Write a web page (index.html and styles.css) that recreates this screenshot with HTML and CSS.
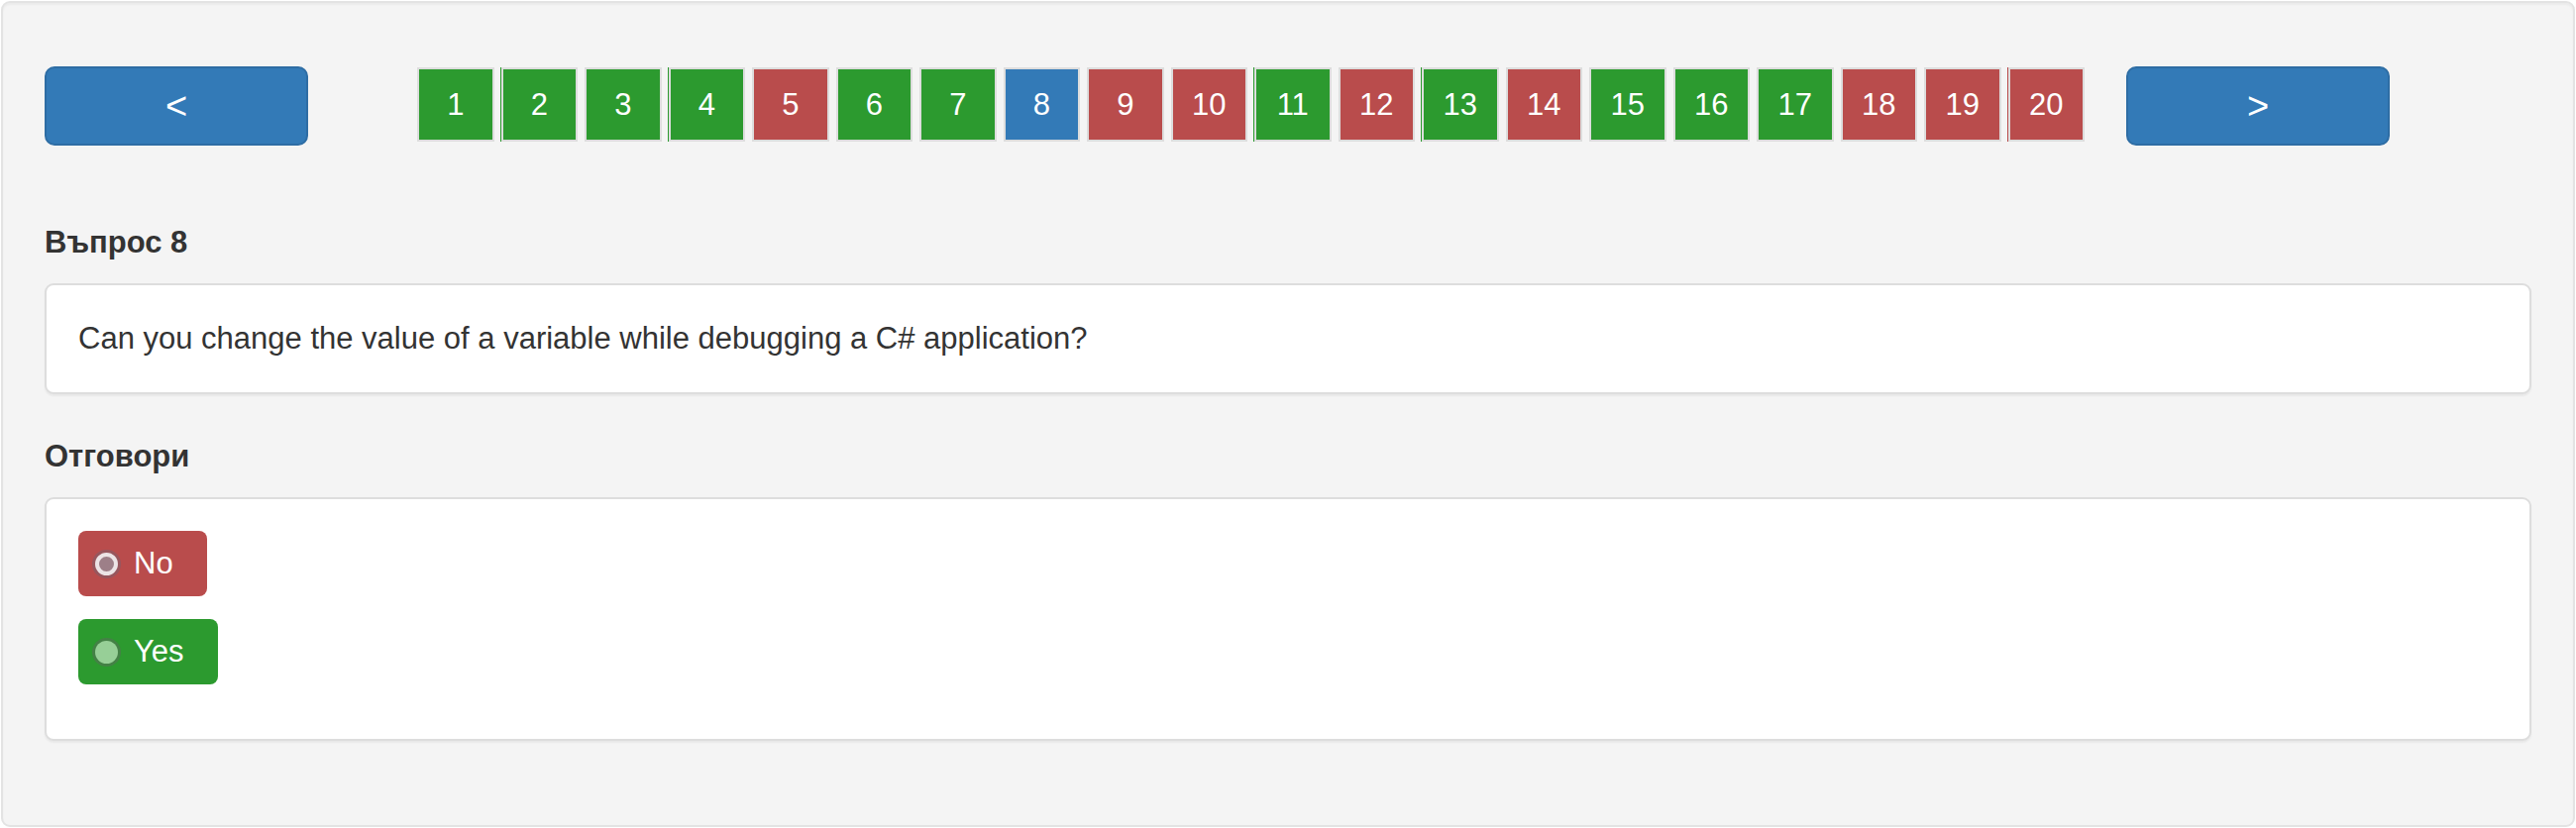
FILE: index.html
```html
<!DOCTYPE html>
<html lang="bg">
	<head>
		<meta charset="UTF-8" />
		<title>Тест</title>
		<link rel="stylesheet" href="styles.css">
	</head>
	<body>
		<div class="well">
			<div class="nav-row">
				<button class="btn-nav">&lt;</button>
				<div class="pager">
					<span class="q ok">1</span>
					<span class="q ok seam">2</span>
					<span class="q ok">3</span>
					<span class="q ok seam">4</span>
					<span class="q bad">5</span>
					<span class="q ok">6</span>
					<span class="q ok">7</span>
					<span class="q cur">8</span>
					<span class="q bad">9</span>
					<span class="q bad">10</span>
					<span class="q ok seam">11</span>
					<span class="q bad">12</span>
					<span class="q ok seam">13</span>
					<span class="q bad">14</span>
					<span class="q ok">15</span>
					<span class="q ok">16</span>
					<span class="q ok">17</span>
					<span class="q bad">18</span>
					<span class="q bad">19</span>
					<span class="q bad seam">20</span>
				</div>
				<button class="btn-nav next">&gt;</button>
			</div>

			<label class="title first">Въпрос 8</label>
			<div class="card">
				<p class="question">Can you change the value of a variable while debugging a C# application?</p>
			</div>

			<label class="title">Отговори</label>
			<div class="card answers">
				<div class="option">
					<label class="answer wrong"><span class="radio checked"></span>No</label>
				</div>
				<div class="option">
					<label class="answer right"><span class="radio"></span>Yes</label>
				</div>
			</div>
		</div>
	</body>
</html>
```

FILE: styles.css
```css
html, body { margin: 0; padding: 0; background: white; color: #333; font-family: "Liberation Sans", Arial, sans-serif; font-size: 31px; line-height: 44px; }
.well { margin: 1px; height: 834px; box-sizing: border-box; padding: 64px 42px 0; background: #f4f4f4; border: 2px solid #e3e3e3; border-radius: 9px; box-shadow: inset 0 2px 2px rgba(0,0,0,0.04); }

.nav-row { display: flex; align-items: flex-start; }
.btn-nav { width: 266px; height: 80px; padding: 0; background: #337ab7; border: 2px solid #2e6da4; border-radius: 10px; color: white; font-family: "Liberation Sans", Arial, sans-serif; font-size: 38px; line-height: 1; }
.btn-nav.next { margin-left: 42px; }

.pager { display: flex; gap: 7px; margin: 1px 0 0 110px; }
.q { width: 77.5px; height: 75px; box-sizing: border-box; border: 2px solid #ddd; display: flex; align-items: center; justify-content: center; color: white; font-size: 31px; }
.q.ok { background: #2c9a2f; }
.q.bad { background: #b94c4c; }
.q.cur { background: #337ab7; }
.q.seam.ok { box-shadow: -1px 0 0 #2c9a2f; }
.q.seam.bad { box-shadow: -1px 0 0 #b94c4c; }

.title { display: block; font-weight: bold; margin: 41px 0 19px; }
.title.first { margin-top: 76px; }

.card { background: white; border: 2px solid #ddd; border-radius: 9px; padding: 32px; box-shadow: 0 2px 2px rgba(0,0,0,0.05); }
.question { margin: 0; }

.answers { padding-bottom: 32px; }
.option { margin-bottom: 23px; }
.answer { display: inline-flex; align-items: center; height: 66px; padding: 0 34px 0 12px; border-radius: 8px; color: white; }
.answer.wrong { background: #b94c4c; }
.answer.right { background: #2c9a2f; }

.radio { width: 23px; height: 23px; margin: 0 16px 0 5px; border-radius: 50%; background: #97cf97; box-shadow: 0 0 0 3px rgba(90,110,90,0.55); }
.radio.checked { width: 15px; height: 15px; background: #9d7f88; border: 4px solid #ece4e6; box-shadow: 0 0 0 3px rgba(110,100,115,0.45); }
```
